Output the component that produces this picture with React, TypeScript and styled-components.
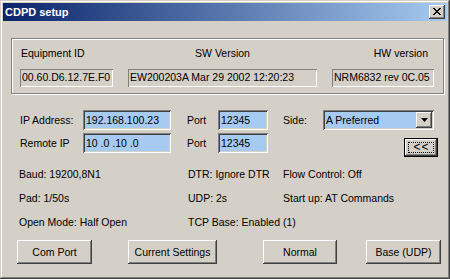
import styled, { createGlobalStyle } from 'styled-components';

const GlobalStyle = createGlobalStyle`
    html, body {
        margin: 0;
        padding: 0;
        background: #d4d0c8;
    }
    body {
        font-family: "Liberation Sans", Arial, sans-serif;
        font-size: 10.5px;
        color: #000;
    }
`;

const info = [
    ['Baud: 19200,8N1', 'DTR: Ignore DTR', 'Flow Control: Off'],
    ['Pad: 1/50s', 'UDP: 2s', 'Start up: AT Commands'],
    ['Open Mode: Half Open', 'TCP Base: Enabled (1)', ''],
];

const buttons = [
    { label: 'Com Port', width: 75, left: 6 },
    { label: 'Current Settings', width: 89, left: 36 },
    { label: 'Normal', width: 74, left: 46 },
    { label: 'Base (UDP)', width: 75, left: 29 },
];

export default function App() {
    return (
        <>
            <GlobalStyle />
            <Window>
                <TitleBar>
                    <Title>CDPD setup</Title>
                    <CloseButton aria-label="close">
                        <svg width="8" height="7" viewBox="0 0 8 7">
                            <path
                                d="M0 0h2v1h1v1h2V1h1V0h2v1H7v1H6v1H5v1h1v1h1v1h1v1H6V6H5V5H3v1H2v1H0V6h1V5h1V4h1V3H2V2H1V1H0z"
                                fill="#000"
                            />
                        </svg>
                    </CloseButton>
                </TitleBar>

                <Body>
                    <GroupBox>
                        <GroupLabel>Equipment ID</GroupLabel>
                        <GroupLabel $align="center">SW Version</GroupLabel>
                        <GroupLabel $align="right">HW version</GroupLabel>
                        <StaticField>00.60.D6.12.7E.F0</StaticField>
                        <StaticField>EW200203A Mar 29 2002 12:20:23</StaticField>
                        <StaticField>NRM6832 rev 0C.05</StaticField>
                    </GroupBox>

                    <AddressGrid>
                        <FieldLabel>IP Address:</FieldLabel>
                        <EditField>192.168.100.23</EditField>
                        <FieldLabel $pad={16}>Port</FieldLabel>
                        <EditField>12345</EditField>
                        <FieldLabel $pad={15}>Side:</FieldLabel>
                        <Combo>
                            <ComboText>A Preferred</ComboText>
                            <ComboArrow>
                                <svg width="7" height="4" viewBox="0 0 7 4">
                                    <path d="M0 0h7L3.5 4z" fill="#000" />
                                </svg>
                            </ComboArrow>
                        </Combo>

                        <FieldLabel>Remote IP</FieldLabel>
                        <EditField>10 .0 .10 .0</EditField>
                        <FieldLabel $pad={16}>Port</FieldLabel>
                        <EditField>12345</EditField>
                        <span />
                        <BackCell>
                            <DefaultButton>
                                <FocusRect>&lt;&lt;</FocusRect>
                            </DefaultButton>
                        </BackCell>
                    </AddressGrid>

                    <InfoGrid>
                        {info.flat().map((text, i) => (
                            <InfoText key={i}>{text}</InfoText>
                        ))}
                    </InfoGrid>

                    <ButtonRow>
                        {buttons.map((b) => (
                            <PushButton key={b.label} $width={b.width} $left={b.left}>
                                {b.label}
                            </PushButton>
                        ))}
                    </ButtonRow>
                </Body>
            </Window>
        </>
    );
}

const raised = `
    box-shadow: inset -1px -1px #404040, inset 1px 1px #ffffff,
        inset -2px -2px #808080, inset 2px 2px #d4d0c8;
`;

const sunken = `
    box-shadow: inset 1px 1px #808080, inset -1px -1px #ffffff,
        inset 2px 2px #404040, inset -2px -2px #d4d0c8;
`;

const Window = styled.div`
    box-sizing: border-box;
    width: 450px;
    height: 279px;
    padding: 3px;
    background: #d4d0c8;
    box-shadow: inset -1px -1px #404040, inset 1px 1px #d4d0c8,
        inset -2px -2px #808080, inset 2px 2px #ffffff;
    display: flex;
    flex-direction: column;
`;

const TitleBar = styled.div`
    height: 18px;
    display: flex;
    align-items: center;
    justify-content: space-between;
    padding: 0 2px;
    background: linear-gradient(to right, #0a246a, #a6caf0);
`;

const Title = styled.span`
    color: #fff;
    font-weight: bold;
    font-size: 11px;
`;

const CloseButton = styled.div`
    width: 16px;
    height: 14px;
    background: #d4d0c8;
    display: flex;
    align-items: center;
    justify-content: center;
    padding-bottom: 1px;
    box-sizing: border-box;
    ${raised}
`;

const Body = styled.div`
    padding: 17px 0 0 8px;
    display: flex;
    flex-direction: column;
`;

const GroupBox = styled.div`
    box-sizing: border-box;
    width: 433px;
    height: 56px;
    border: 1px solid #808080;
    box-shadow: 1px 1px 0 #fff, inset 1px 1px 0 #fff;
    padding: 8px 10px 0 8px;
    display: grid;
    grid-template-columns: 93px 189px 102px;
    grid-template-rows: 13px 18px;
    column-gap: 15px;
    row-gap: 9px;
`;

const GroupLabel = styled.div<{ $align?: 'left' | 'center' | 'right' }>`
    text-align: ${(p) => p.$align ?? 'left'};
    padding-left: ${(p) => (p.$align ? 0 : 1)}px;
    padding-right: ${(p) => (p.$align === 'right' ? 6 : 0)}px;
    line-height: 13px;
    white-space: nowrap;
`;

const StaticField = styled.div`
    box-sizing: border-box;
    height: 18px;
    padding: 0 2px;
    line-height: 17px;
    white-space: nowrap;
    overflow: hidden;
    box-shadow: inset 1px 1px #808080, inset -1px -1px #ffffff;
`;

const AddressGrid = styled.div`
    margin-top: 16px;
    padding-left: 9px;
    display: grid;
    grid-template-columns: 63px 88px 47px 50px 55px 111px;
    grid-template-rows: 20px 20px;
    row-gap: 3px;
    align-items: center;
`;

const FieldLabel = styled.div<{ $pad?: number }>`
    padding-left: ${(p) => p.$pad ?? 0}px;
    line-height: 13px;
    white-space: nowrap;
`;

const EditField = styled.div`
    box-sizing: border-box;
    height: 20px;
    padding: 0 3px;
    line-height: 20px;
    background: #a6caf0;
    white-space: nowrap;
    ${sunken}
`;

const Combo = styled.div`
    box-sizing: border-box;
    height: 20px;
    padding: 2px;
    display: flex;
    align-items: stretch;
    background: #a6caf0;
    ${sunken}
`;

const ComboText = styled.div`
    flex: 1;
    padding-left: 1px;
    line-height: 16px;
`;

const ComboArrow = styled.div`
    box-sizing: border-box;
    width: 16px;
    background: #d4d0c8;
    display: flex;
    align-items: center;
    justify-content: center;
    ${raised}
`;

const BackCell = styled.div`
    display: flex;
    justify-content: flex-end;
    margin-right: -4px;
    align-self: end;
    margin-bottom: -4px;
`;

const DefaultButton = styled.div`
    box-sizing: border-box;
    width: 34px;
    height: 19px;
    border: 1px solid #000;
    background: #d4d0c8;
    padding: 3px;
    ${raised}
`;

const FocusRect = styled.div`
    height: 100%;
    box-sizing: border-box;
    border: 1px dotted #000;
    display: flex;
    align-items: center;
    justify-content: center;
    font-size: 12px;
    line-height: 11px;
    letter-spacing: 1px;
    padding-left: 1px;
`;

const InfoGrid = styled.div`
    margin-top: 9px;
    padding-left: 8px;
    display: grid;
    grid-template-columns: 169px 95px 1fr;
    grid-auto-rows: 24px;
    align-items: center;
`;

const InfoText = styled.div`
    line-height: 13px;
    white-space: nowrap;
`;

const ButtonRow = styled.div`
    margin-top: 6px;
    display: flex;
`;

const PushButton = styled.div<{ $width: number; $left: number }>`
    box-sizing: border-box;
    width: ${(p) => p.$width}px;
    height: 24px;
    margin-left: ${(p) => p.$left}px;
    display: flex;
    align-items: center;
    justify-content: center;
    background: #d4d0c8;
    ${raised}
`;
